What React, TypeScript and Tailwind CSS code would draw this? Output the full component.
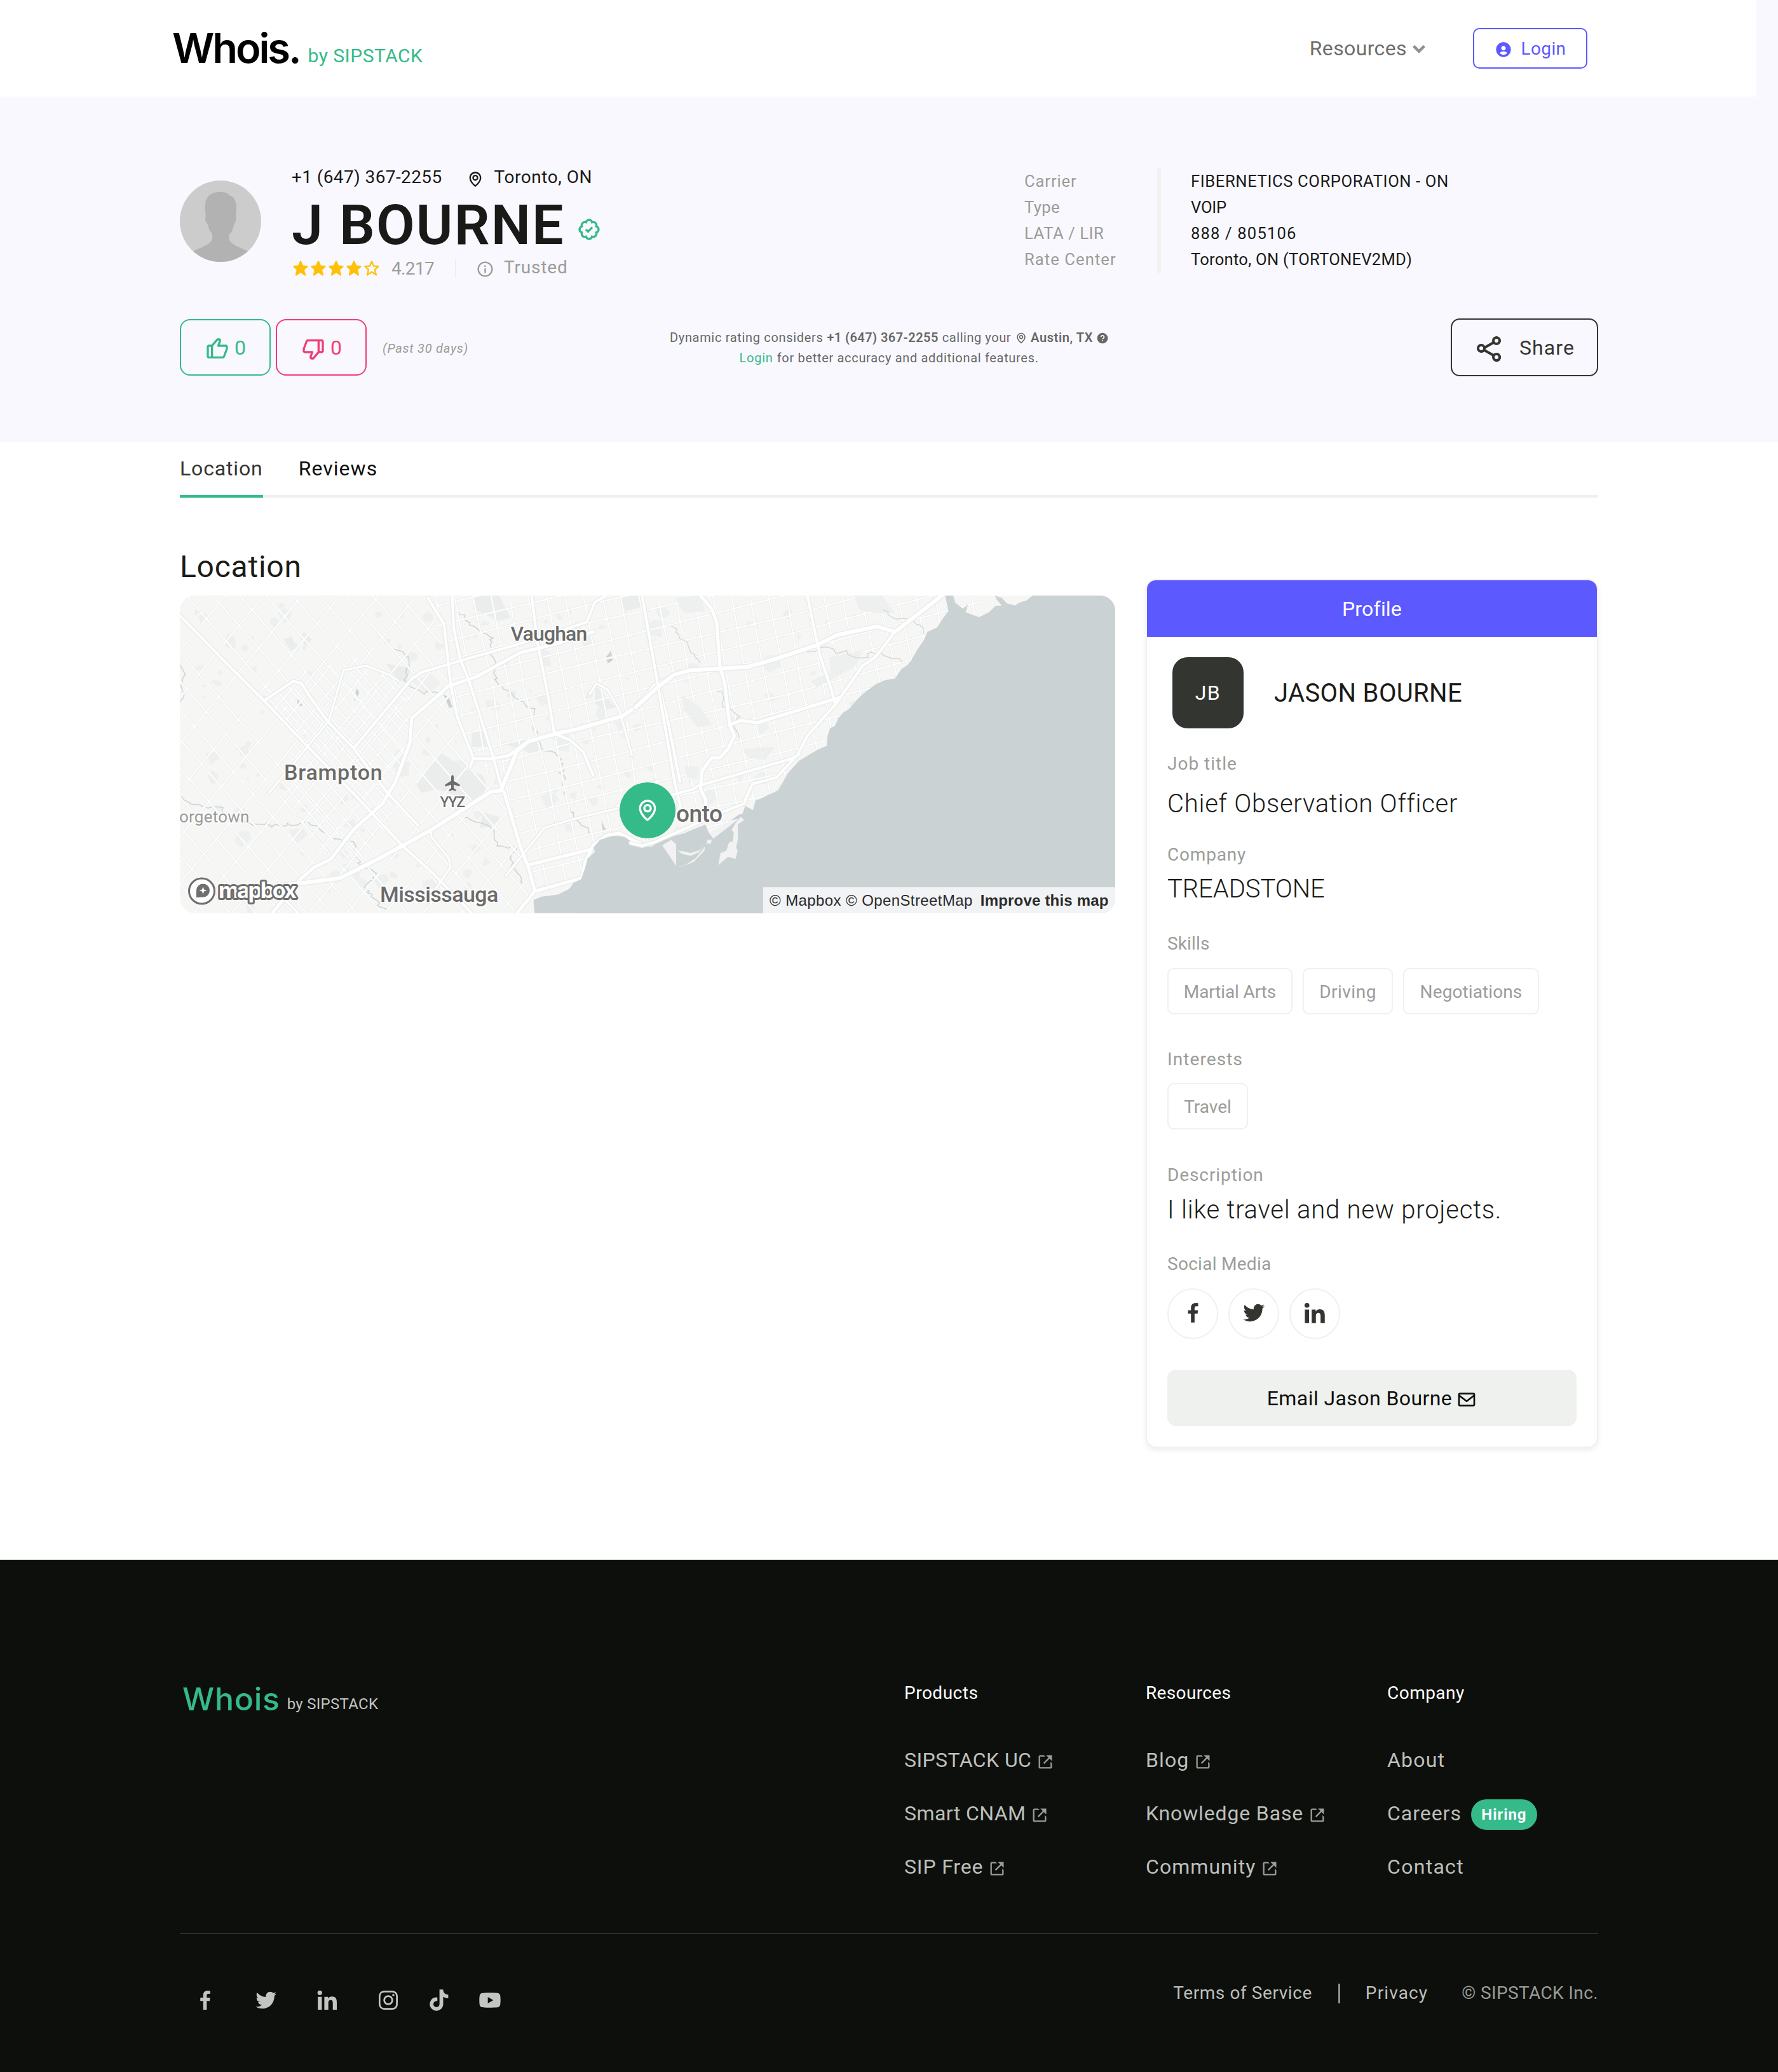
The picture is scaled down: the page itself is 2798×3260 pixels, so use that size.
import React from 'react';
import {
  BiBadgeCheck,
  BiChevronDown,
  BiDislike,
  BiEnvelope,
  BiInfoCircle,
  BiLike,
  BiLinkExternal,
  BiLogoFacebook,
  BiLogoInstagram,
  BiLogoLinkedin,
  BiLogoTiktok,
  BiLogoTwitter,
  BiLogoYoutube,
  BiMap,
  BiShareAlt,
  BiSolidHelpCircle,
  BiSolidStar,
  BiSolidUserCircle,
  BiStar,
} from 'react-icons/bi';

/* ---------------------------------- Map ---------------------------------- */

// Map geometry is kept in a stretched survey grid and projected by this matrix.
const WEST = 'matrix(0.5102 0 0 0.34437 -12.8 -16.9)';
const EAST = 'matrix(0.5102 0 0 0.34437 717.2 -16.9)';

function random(seed: number) {
  let a = seed;
  return () => {
    a = (a + 0x6d2b79f5) | 0;
    let t = Math.imul(a ^ (a >>> 15), 1 | a);
    t = (t + Math.imul(t ^ (t >>> 7), 61 | t)) ^ t;
    return ((t ^ (t >>> 14)) >>> 0) / 4294967296;
  };
}

const rnd = random(11);
const range = (from: number, to: number, step: number) => {
  const out: number[] = [];
  for (let v = from; v < to; v += step) out.push(v);
  return out;
};

const westGrid = [
  ...range(-830, -60, 78).map((x) => `${x},49 ${x + 855},1500`),
  ...range(45, 1000, 82).map((x) => `${x},49 ${x + 855},1500`),
  ...range(-640, 1100, 118).map((x) => `${x},1500 ${x + 806},49`),
];
const bramptonGrid = [
  ...range(-300, 700, 46).map((x) => `${x},49 ${x + 855},1500`),
  ...range(-200, 700, 62).map((x) => `${x},1500 ${x + 806},49`),
];
const eastGrid = [
  ...range(700, 2500, 57).map((x) => {
    const j = (rnd() - 0.5) * 24;
    return `${x},49 ${x + 55 + j},470 ${x + 110 - j},900 ${x + 190},1500`;
  }),
  ...range(140, 2300, 88).map((y) => {
    const j = (rnd() - 0.5) * 26;
    return `700,${y} 1300,${y - 225 + j} 1900,${y - 440 - j} 2500,${y - 680}`;
  }),
];

// Parks and built-up patches scattered over the land.
const patches = range(0, 230, 1).map(() => {
  const x = 60 + rnd() * 2100;
  const y = 60 + rnd() * 1420;
  const s = 5 + rnd() * rnd() * 30;
  const p: string[] = [];
  for (let i = 0; i < 7; i++) {
    const r = s * (0.45 + rnd() * 0.75);
    p.push(`${(x + Math.cos(i * 0.9) * r).toFixed(0)},${(y + Math.sin(i * 0.9) * r * 1.4).toFixed(0)}`);
  }
  return p.join(' ');
});

function meander(points: number[][], wobble: number) {
  const out: string[] = [];
  for (let i = 0; i < points.length - 1; i++) {
    const [x1, y1] = points[i];
    const [x2, y2] = points[i + 1];
    const n = Math.max(2, Math.round(Math.hypot(x2 - x1, y2 - y1) / 14));
    for (let k = 0; k < n; k++) {
      const t = k / n;
      out.push(
        `${(x1 + (x2 - x1) * t + (rnd() - 0.5) * wobble).toFixed(0)},${(y1 + (y2 - y1) * t + (rnd() - 0.5) * wobble).toFixed(0)}`,
      );
    }
  }
  return out.join(' ');
}

const westRivers = [
  meander([[25, 360], [40, 410], [28, 450], [38, 500], [25, 550]], 6),
  meander([[25, 960], [70, 1010], [150, 1020], [190, 1060], [240, 1090], [320, 1100], [430, 1085], [490, 1160], [560, 1180], [580, 1280], [630, 1320], [600, 1380], [640, 1470], [675, 1500]], 18),
  meander([[990, 310], [1000, 450], [1060, 510], [1110, 560], [1125, 670], [1140, 750], [1200, 790], [1210, 940], [1240, 1060], [1300, 1150]], 18),
  meander([[900, 1060], [980, 1100], [1010, 1200], [1060, 1200], [1045, 1270], [1095, 1390]], 16),
  meander([[690, 290], [730, 350], [720, 430], [760, 490], [840, 500]], 20),
  meander([[880, 120], [930, 190], [990, 240], [985, 320]], 16),
];
const eastRivers = [
  meander([[255, 480], [275, 550], [320, 600], [305, 660], [320, 710]], 16),
  meander([[765, 110], [800, 155], [840, 150], [885, 195], [892, 240]], 10),
  meander([[520, 300], [600, 290], [680, 330], [760, 310], [825, 360]], 24),
  meander([[115, 190], [160, 280], [205, 370]], 14),
];

const westRoads: [string, number][] = [
  ['25,140 160,345 285,530 420,740 575,975 710,1190 800,1310 860,1400 925,1500', 4],
  ['285,530 375,440 400,450 430,520 485,630 560,745 665,950 760,1100', 4],
  ['310,1500 400,1340 440,1290 490,1255 560,1120 650,1000 690,900 735,720 740,610 830,495 850,465 940,420 1075,310 1185,270 1300,215', 5],
  ['565,740 740,430 770,400 895,345 1060,275 1190,215 1280,170 1305,80 1340,49', 4],
  ['350,1370 390,1365 520,1340 640,1250 800,1120 985,945 1015,940 1065,760 1100,715 1185,680 1250,660 1390,600 1430,560 1490,460 1568,400', 6],
  ['1025,945 1050,1070 1075,1195 1100,1290 1120,1400', 5],
  ['1065,1500 1120,1400 1265,1340 1275,1270 1300,1190 1340,1145 1380,1135 1420,1165 1455,1190 1500,1175 1568,1130', 5],
  ['935,795 985,795 1040,780 1100,715', 5],
  ['865,49 870,200 890,340 915,430 990,780 1020,940', 4],
  ['790,60 840,180 860,450 880,600 930,790 920,835', 4],
  ['1110,49 1130,280 1160,500 1180,680 1230,710 1270,765 1300,870', 4],
  ['1290,500 1310,450 1345,480 1380,570 1420,780', 3],
  ['1450,49 1480,300 1505,470 1530,620 1568,900', 4],
  ['1100,1280 1290,1210', 5],
  ['1030,1330 1150,1110 1240,1070 1380,1020', 3],
  ['800,1120 800,1150 855,1250 860,1290 800,1420', 3],
  ['350,1440 390,1500', 3],
  ['300,950 385,800 485,620 530,390 600,370 670,410 700,440', 3],
];
const eastRoads: [string, number][] = [
  ['0,560 70,465 120,410 170,390 345,375 430,340 560,275 620,230 745,190 800,215 945,49', 6],
  ['-15,1180 20,1192 60,1175 90,1155 160,1110 230,1060 335,1000 340,975 360,910 435,880 500,775 530,690 620,540 700,370 740,330 800,215', 4],
  ['200,49 235,110 250,170 260,370 275,450 290,640 305,690 285,750 260,790 235,790 205,850 200,930 215,980 220,1050', 5],
  ['530,49 545,160 570,330 600,460 615,540', 4],
  ['20,49 50,300 90,640 120,900 150,1080', 4],
  ['110,960 175,935 190,920 340,855 480,795 505,775', 4],
  ['290,640 325,620 375,630 630,515', 5],
  ['-60,1010 60,970 110,960', 3],
];

const WATER =
  '-311,1500 -315,1440 -290,1425 -240,1415 -205,1390 -190,1360 -168,1345 -155,1290 -148,1250 -125,1220 -130,1200 -110,1165 -70,1147 -35,1150 -5,1180 20,1195 50,1197 60,1185 80,1158 110,1150 150,1135 190,1110 215,1095 225,1130 240,1160 262,1110 300,1070 318,1050 330,1045 338,1010 362,1030 370,985 390,975 405,962 440,940 455,900 470,860 505,803 540,772 560,755 590,735 592,690 600,655 615,645 625,610 640,585 660,565 680,530 700,500 740,455 770,435 800,428 820,385 840,365 850,345 870,295 890,250 900,215 930,195 945,160 965,120 955,49 980,49 985,80 1010,110 1025,90 1018,125 1035,135 1060,148 1090,125 1110,97 1130,95 1115,70 1108,49 1130,60 1145,85 1170,95 1185,80 1205,72 1225,49 1490,49 1490,1510';

const LAND = [
  '82,1190 110,1165 125,1185 125,1285 105,1240',
  '125,1287 150,1283 185,1250 215,1195 212,1215 180,1265 145,1287',
  '130,1215 145,1230 170,1238 195,1222 212,1190 198,1212 170,1226 148,1218',
  '222,1165 235,1165 232,1183 218,1182',
  '325,1060 335,1075 315,1095 316,1160 310,1200 315,1215 308,1252 285,1243 255,1280 262,1225 280,1215 288,1178 300,1172 303,1130 296,1120 310,1085',
  '228,1135 295,1075 318,1070 240,1160',
];

function Roads({ items }: { items: [string, number][] }) {
  return (
    <g fill="none" strokeLinejoin="round" strokeLinecap="round">
      {items.map(([p, w], i) => (
        <polyline key={`c${i}`} points={p} stroke="#eaedec" strokeWidth={w + 3} vectorEffect="non-scaling-stroke" />
      ))}
      {items.map(([p, w], i) => (
        <polyline key={`r${i}`} points={p} stroke="#ffffff" strokeWidth={w} vectorEffect="non-scaling-stroke" />
      ))}
    </g>
  );
}

function Grid({ items, clip }: { items: string[]; clip: string }) {
  return (
    <g clipPath={`url(#${clip})`} fill="none">
      {items.map((p, i) => (
        <polyline key={`c${i}`} points={p} stroke="#eaeded" strokeWidth="3.6" vectorEffect="non-scaling-stroke" />
      ))}
      {items.map((p, i) => (
        <polyline key={`r${i}`} points={p} stroke="#ffffff" strokeWidth="2" vectorEffect="non-scaling-stroke" />
      ))}
    </g>
  );
}

function Label({ x, y, size, spacing = 0, weight = 500, fill = '#6b6b6b', children }: { x: number; y: number; size: number; spacing?: number; weight?: number; fill?: string; children: string }) {
  return (
    <text x={x} y={y} fontFamily="Roboto, sans-serif" fontSize={size} fontWeight={weight} letterSpacing={spacing} fill={fill} stroke="#ffffff" strokeWidth="4" strokeOpacity="0.8" strokeLinejoin="round" paintOrder="stroke">
      {children}
    </text>
  );
}

function MapView() {
  return (
    <div className="relative mt-[17px] h-[500px] w-[1472px] overflow-hidden rounded-3xl bg-[#f6f6f4]">
      <svg width="1472" height="500" viewBox="0 0 1472 500" className="block">
        <defs>
          <clipPath id="west">
            <polygon points="25,49 730,49 800,90 860,465 880,600 930,790 1020,940 1100,1290 1120,1500 25,1500" />
          </clipPath>
          <clipPath id="brampton">
            <polygon points="285,530 400,400 560,330 700,440 740,610 700,900 640,1230 470,1280 330,900 380,720" />
          </clipPath>
          <clipPath id="east">
            <polygon points="730,49 3000,49 3000,1500 1120,1500 1100,1290 1020,940 930,790 880,600 860,465 800,90" />
          </clipPath>
        </defs>
        <g transform={WEST}>
          {patches.map((p, i) => (
            <polygon key={i} points={p} fill="#eef0ef" />
          ))}
          <g fill="#ebedec">
            <polygon points="830,765 900,840 960,870 975,930 930,985 870,960 820,935 770,950 755,915" />
            <polygon points="345,250 370,235 382,280 368,305" />
            <polygon points="395,235 410,215 432,250 412,282" />
            <polygon points="925,670 970,680 972,740 925,740" />
            <polygon points="1305,455 1370,560 1340,570 1305,545" />
            <polygon points="1375,49 1450,49 1455,100 1400,120" />
            <polygon points="935,49 1010,49 1045,150 1010,165 930,110" />
            <polygon points="960,1040 1010,1060 1000,1100 950,1110" />
            <polygon points="660,360 740,380 720,450 690,420" />
            <polygon points="740,440 800,410 830,450 790,500" fill="#f0f0f0" />
            <polygon points="1010,720 1130,700 1150,760 1110,770" />
          </g>
          <g fill="#cad2d3">
            <polygon points="570,472 578,490 572,525 562,528" />
            <polygon points="388,520 405,535 400,555 388,548" />
            <polygon points="838,500 855,515 866,560 856,562" />
            <polygon points="1340,330 1355,300 1360,345 1345,360" />
            <polygon points="1325,1075 1335,1110 1345,1125 1330,1128" />
          </g>
          {westRivers.map((p, i) => (
            <polyline key={i} points={p} fill="none" stroke="#cbd4d5" strokeWidth="1.5" vectorEffect="non-scaling-stroke" />
          ))}
          <Grid items={westGrid} clip="west" />
          <Grid items={bramptonGrid} clip="brampton" />
          <Grid items={eastGrid} clip="east" />
          <Roads items={westRoads} />
        </g>
        <g transform={EAST}>
          <g fill="#ebedec" fillOpacity="0.7">
            <polygon points="675,49 760,49 800,130 750,130 690,115" />
            <polygon points="140,500 200,560 235,640 190,650 150,570" />
            <polygon points="600,330 700,300 680,370 620,420 560,470 540,440 600,400" />
            <polygon points="330,750 430,740 400,800 350,790" />
            <polygon points="120,60 200,49 215,120 150,130" />
            <polygon points="150,830 195,830 190,890 160,880" />
          </g>
          {eastRivers.map((p, i) => (
            <polyline key={i} points={p} fill="none" stroke="#d3dadb" strokeWidth="1.5" vectorEffect="non-scaling-stroke" />
          ))}
          <Roads items={eastRoads.slice(0, 1)} />
          <polygon points={WATER} fill="#cad2d3" />
          {LAND.map((p, i) => (
            <polygon key={i} points={p} fill="#f1f2f1" />
          ))}
          <Roads items={eastRoads} />
        </g>
        <path d="M429 282.500q2 0 2 4v5l9.500 6v3l-9.500-3v5.500l3.500 2.500v2l-5.500-1.500-5.500 1.500v-2l3.500-2.500v-5.500l-9.500 3v-3l9.500-6v-5q0-4 2-4z" fill="#6b6b6b" />
        <Label x={520.5} y={71} size={32} spacing={-0.86}>Vaughan</Label>
        <Label x={164} y={290} size={34} spacing={0.8}>Brampton</Label>
        <Label x={409.5} y={333} size={23} spacing={-1.3}>YYZ</Label>
        <Label x={-1} y={357} size={26} weight={400} fill="#999b9a" spacing={0.23}>orgetown</Label>
        <Label x={315} y={482} size={34} spacing={-0.56}>Mississauga</Label>
        <Label x={781} y={356} size={37} spacing={-0.5}>onto</Label>
        <circle cx="34.500" cy="465" r="20" fill="#ffffff" stroke="#6f6f6f" strokeWidth="3" />
        <path d="M26 475v-11a10.500 10.500 0 1 1 10.500 10.500z" fill="#6f6f6f" />
        <path d="m36.500 458 1.600 4.400 4.400 1.600-4.400 1.600-1.600 4.400-1.600-4.400-4.400-1.600 4.400-1.600z" fill="#ffffff" />
        <text x="61" y="476" fontFamily="Inter, sans-serif" fontSize="35" fontWeight="700" textLength="123" fill="#ffffff" stroke="#6f6f6f" strokeWidth="6" strokeLinejoin="round" paintOrder="stroke">
          mapbox
        </text>
      </svg>
      <div className="absolute top-[294px] left-[692px] flex size-[88px] items-center justify-center rounded-full bg-[#35ba8a] text-white">
        <BiMap size={40} />
      </div>
      <div className="absolute right-0 bottom-0 flex h-[41px] w-[554px] items-center gap-3 bg-[#f1f3f5] pl-[10px] font-['Liberation_Sans',sans-serif] text-[24px] leading-[41px] whitespace-nowrap text-[#2b2b2b]">
        <span className="tracking-[0.4px]">© Mapbox © OpenStreetMap</span>
        <span className="font-bold tracking-[0.2px]">Improve this map</span>
      </div>
    </div>
  );
}

/* --------------------------------- Header -------------------------------- */

function Header() {
  return (
    <header className="flex h-[152px] w-[2764px] items-center justify-between bg-white pr-[266px] pl-[271px]">
      <div className="flex items-center">
        <span className="font-['Inter',sans-serif] text-[65px] leading-[80px] font-semibold tracking-[-3.1px] text-black">Whois.</span>
        <span className="ml-[13px] pt-6 text-[30px] leading-[40px] tracking-[0.48px] text-[#35ba8a]">by SIPSTACK</span>
      </div>
      <nav className="flex items-center">
        <a className="flex items-center text-[32px] leading-[40px] tracking-[0.38px] text-[#6c6e6b]">
          Resources
          <BiChevronDown size={38} className="text-[#8f918e]" stroke="currentColor" strokeWidth={0.8} />
        </a>
        <a className="ml-[66px] flex h-16 w-[180px] items-center justify-center gap-[14px] rounded-[10px] border-2 border-[#5c59ff] text-[28px] tracking-[0.35px] text-[#5c59ff]">
          <BiSolidUserCircle size={28} className="mt-1" />
          <span className="pt-0.5">Login</span>
        </a>
      </nav>
    </header>
  );
}

/* ---------------------------------- Hero --------------------------------- */

function Avatar() {
  return (
    <svg width="128" height="128" viewBox="0 0 128 128" className="mt-[25px] shrink-0 rounded-full bg-[#cccccc]">
      <path
        d="M0 128V122C10 116 18 113 22 111C30 106 48 102 51 92V84C46 79 45 72 44 69C40 66 39 60 41 56C38 38 38 18 64 18C71 18 76 20 78 23.500C88 25 91 40 88 56C90 60 88 66 85 69C84 76 82 81 77.500 85V92C80 102 98 106 106 111C112 113 120 118 128 122V128Z"
        fill="#b2b2b2"
      />
    </svg>
  );
}

const details: [string, string, string, string][] = [
  ['Carrier', 'FIBERNETICS CORPORATION - ON', 'tracking-[0.88px]', 'tracking-[0.59px]'],
  ['Type', 'VOIP', 'tracking-[0.38px]', 'tracking-[-0.23px]'],
  ['LATA / LIR', '888 / 805106', 'tracking-[0.55px]', 'tracking-[1.15px]'],
  ['Rate Center', 'Toronto, ON (TORTONEV2MD)', 'tracking-[1.07px]', 'tracking-[0.24px]'],
];

function Hero() {
  return (
    <section className="h-[544px]">
      <div className="mx-auto w-[2232px] pt-[107px]">
        <div className="flex items-start">
          <Avatar />
          <div className="ml-12">
            <div className="flex items-center text-[28px] leading-[40px] text-[#1a1b18]">
              <span className="tracking-[0.39px]">+1 (647) 367-2255</span>
              <BiMap size={28} className="mt-[5px] ml-[38px]" />
              <span className="ml-4 tracking-[0.55px]">Toronto, ON</span>
            </div>
            <div className="mt-[11px] flex h-[88px] items-center">
              <h1 className="text-[88px] leading-[88px] font-semibold tracking-[2.09px] text-[#191a17]">J BOURNE</h1>
              <BiBadgeCheck size={40} className="mt-[14px] ml-[18px] text-[#35ba8a]" />
            </div>
            <div className="mt-2 flex h-8 items-center text-[28px] leading-[32px] text-[#9a9d98]">
              <div className="flex text-[#ffc107]">
                <BiSolidStar size={28} />
                <BiSolidStar size={28} />
                <BiSolidStar size={28} />
                <BiSolidStar size={28} />
                <BiStar size={28} />
              </div>
              <span className="ml-[17px] w-[68px] pt-0.5 tracking-[-0.65px]">4.217</span>
              <span className="ml-8 h-[30px] w-0.5 bg-[#eff0ee]" />
              <BiInfoCircle size={29} className="mt-[3px] ml-[31px]" />
              <span className="-mt-0.5 ml-[15px] tracking-[0.82px]">Trusted</span>
            </div>
          </div>
          <div className="mt-[6px] mr-[284px] ml-auto flex text-[25.6px] leading-[41px]">
            <div className="w-[209px] text-[#9a9d98]">
              {details.map(([label, , track]) => (
                <div key={label} className={track}>{label}</div>
              ))}
            </div>
            <div className="w-1.5 bg-[#f1f2f1]" />
            <div className="w-[404px] pl-[47px] whitespace-nowrap text-[#1a1b18]">
              {details.map(([label, value, , track]) => (
                <div key={label} className={track}>{value}</div>
              ))}
            </div>
          </div>
        </div>

        <div className="mt-[63px] grid h-[91px] grid-cols-[1fr_auto_1fr] items-center">
          <div className="flex items-center">
            <button className="flex h-[89px] w-[143px] items-center justify-center gap-[7px] rounded-2xl border-2 border-[#35ba8a] text-[32px] text-[#35ba8a]">
              <BiLike size={40} className="mt-1" />0
            </button>
            <button className="ml-2 flex h-[89px] w-[143px] items-center justify-center gap-[7px] rounded-2xl border-2 border-[#ef3e74] text-[32px] text-[#ef3e74]">
              <BiDislike size={40} className="mt-1" />0
            </button>
            <span className="ml-[25px] pt-[3px] text-[20px] tracking-[0.75px] text-[#9a9d98] italic">(Past 30 days)</span>
          </div>
          <div className="flex flex-col items-center text-[20px] leading-[32px] text-[#666865]">
            <div className="flex items-center gap-[6px] pl-px">
              <span className="tracking-[0.67px]">Dynamic rating considers</span>
              <b className="font-semibold tracking-[0.44px]">+1 (647) 367-2255</b>
              <span className="tracking-[0.55px]">calling your</span>
              <BiMap size={20} className="mt-[3px] -mr-px" />
              <b className="font-semibold tracking-[0.6px]">Austin, TX</b>
              <BiSolidHelpCircle size={20} className="mt-[3px] -ml-[1px]" />
            </div>
            <div className="flex gap-[6px]">
              <span className="tracking-[0.8px] text-[#35ba8a]">Login</span>
              <span className="tracking-[0.68px]">for better accuracy and additional features.</span>
            </div>
          </div>
          <button className="ml-auto flex h-[91px] w-[232px] items-center justify-center gap-[23px] rounded-[14px] border-2 border-[#333531] text-[32px] tracking-[1.11px] text-[#333531]">
            <BiShareAlt size={48} className="mt-1" />
            Share
          </button>
        </div>
      </div>
    </section>
  );
}

/* ------------------------------ Profile card ----------------------------- */

const chip = 'flex h-[73px] items-center justify-center rounded-[10px] border-2 border-[#f0f0f0] pt-0.5 text-[28px] text-[#9a9d98]';
const label = 'text-[28px] leading-[40px] text-[#9a9d98]';
const value = 'text-[40px] leading-[48px] font-light text-[#1a1b18]';
const round = 'flex size-20 items-center justify-center rounded-full border-2 border-[#f0f0f0] pb-[3px] text-[#333531]';

function ProfileCard() {
  return (
    <aside className="mt-[128px] w-[712px] overflow-hidden rounded-2xl border-2 border-[#f0f0f1] bg-white shadow-[0_4px_8px_rgba(0,0,0,0.07)]">
      <div className="h-[89px] bg-[#5c59ff] pt-px text-center text-[32px] leading-[89px] tracking-[0.2px] text-white">Profile</div>
      <div className="px-8 pt-8 pb-8">
        <div className="ml-2 flex items-center">
          <div className="flex size-28 items-center justify-center rounded-3xl bg-[#333531] text-[32px] tracking-[1.5px] text-white">JB</div>
          <span className="ml-12 pt-0.5 text-[40px] leading-[48px] tracking-[0.36px] text-[#1a1b18]">JASON BOURNE</span>
        </div>
        <div className={`${label} mt-9 tracking-[1px]`}>Job title</div>
        <div className={`${value} mt-[19px] tracking-[0.75px]`}>Chief Observation Officer</div>
        <div className={`${label} mt-9 tracking-[0.81px]`}>Company</div>
        <div className={`${value} mt-[10px] tracking-[-0.09px]`}>TREADSTONE</div>
        <div className={`${label} mt-[42px] tracking-[0.15px]`}>Skills</div>
        <div className="mt-[18px] flex gap-4">
          <div className={`${chip} w-[197px] tracking-[-0.13px]`}>Martial Arts</div>
          <div className={`${chip} w-[142px] tracking-[0.5px]`}>Driving</div>
          <div className={`${chip} w-[214px] tracking-[0.1px]`}>Negotiations</div>
        </div>
        <div className={`${label} mt-[51px] tracking-[1.1px]`}>Interests</div>
        <div className="mt-[17px] flex">
          <div className={`${chip} w-[127px]`}>Travel</div>
        </div>
        <div className={`${label} mt-[52px] tracking-[0.9px]`}>Description</div>
        <div className={`${value} mt-[11px] tracking-[0.78px]`}>I like travel and new projects.</div>
        <div className={`${label} mt-[41px] tracking-[0.28px]`}>Social Media</div>
        <div className="mt-[18px] flex gap-4">
          <div className={round}><BiLogoFacebook size={41} /></div>
          <div className={round}><BiLogoTwitter size={41} /></div>
          <div className={round}><BiLogoLinkedin size={42} /></div>
        </div>
        <button className="mt-12 flex h-[89px] w-full items-center justify-center gap-[7px] rounded-[14px] bg-[#eff1ee] text-[32px] tracking-[0.42px] text-[#0e0f0c]">
          Email Jason Bourne
          <BiEnvelope size={32} className="mt-1" />
        </button>
      </div>
    </aside>
  );
}

/* --------------------------------- Footer -------------------------------- */

function FooterLink({ track, children }: { track: string; children: string }) {
  return (
    <div className="flex h-10 items-center">
      <span className={track}>{children}</span>
      <BiLinkExternal size={28} className="mt-[6px] ml-[8px] text-[#9a9c98]" />
    </div>
  );
}

const column = 'flex flex-col gap-11 text-[32px] leading-[40px] text-[#bdbfbb]';
const heading = 'mb-[21px] pt-px text-[28px] leading-[40px] text-white';

function Footer() {
  return (
    <footer className="mt-[176px] h-[806px] bg-[#0d0f0c]">
      <div className="mx-auto w-[2232px] pt-[189px]">
        <div className="flex border-b-2 border-[#2c2e2b] pb-[84px] whitespace-nowrap">
          <div className="ml-1 flex h-[60px] w-[1136px] items-center">
            <span className="font-['Inter',sans-serif] text-[50px] leading-[60px] font-medium tracking-[0.74px] text-[#35ba8a]">Whois</span>
            <span className="ml-[11px] pt-4 text-[24px] leading-[40px] tracking-[0.3px] text-[#c4c5c3]">by SIPSTACK</span>
          </div>
          <div className={`${column} w-[380px]`}>
            <div className={`${heading} tracking-[0.5px]`}>Products</div>
            <FooterLink track="tracking-[0.4px]">SIPSTACK UC</FooterLink>
            <FooterLink track="tracking-[0.41px]">Smart CNAM</FooterLink>
            <FooterLink track="tracking-[0.85px]">SIP Free</FooterLink>
          </div>
          <div className={`${column} w-[380px]`}>
            <div className={`${heading} tracking-[0.35px]`}>Resources</div>
            <FooterLink track="tracking-[1.1px]">Blog</FooterLink>
            <FooterLink track="tracking-[0.85px]">Knowledge Base</FooterLink>
            <FooterLink track="tracking-[1.05px]">Community</FooterLink>
          </div>
          <div className={column}>
            <div className={`${heading} tracking-[0.47px]`}>Company</div>
            <div className="tracking-[1.2px]">About</div>
            <div className="flex h-10 items-center">
              <span className="tracking-[0.97px]">Careers</span>
              <span className="mt-1 ml-[15px] flex h-12 w-[104px] items-center justify-center rounded-full bg-[#35ba8a] text-[24px] font-bold tracking-[0.9px] text-white">Hiring</span>
            </div>
            <div className="tracking-[1.3px]">Contact</div>
          </div>
        </div>
        <div className="flex items-start justify-between">
          <div className="mt-[84px] ml-5 flex gap-10 text-[#c4c5c3]">
            <div className="flex gap-14">
              <BiLogoFacebook size={40} />
              <BiLogoTwitter size={40} />
              <BiLogoLinkedin size={40} />
              <BiLogoInstagram size={40} />
            </div>
            <BiLogoTiktok size={40} />
            <BiLogoYoutube size={40} />
          </div>
          <div className="mt-[73px] flex items-center text-[28px] leading-[40px] text-[#bdbfbb]">
            <span className="tracking-[0.57px]">Terms of Service</span>
            <span className="ml-[41px] h-[31px] w-[3px] bg-[#8f918e]" />
            <span className="ml-10 tracking-[1.13px]">Privacy</span>
            <span className="ml-[53px] tracking-[0.38px] text-[#9a9c98]">© SIPSTACK Inc.</span>
          </div>
        </div>
      </div>
    </footer>
  );
}

export default function App() {
  return (
    <div className="h-[3260px] w-[2798px] overflow-hidden bg-white font-['Roboto',sans-serif]">
      <div className="bg-[#f9f8fe]">
        <Header />
        <Hero />
      </div>
      <main className="mx-auto w-[2232px]">
        <nav className="flex h-[87px] gap-[56px] border-b-4 border-[#eff1ee] text-[32px] leading-[82px]">
          <span className="h-[87px] border-b-4 border-[#35ba8a] tracking-[0.85px] text-[#333531]">Location</span>
          <span className="tracking-[1.05px] text-[#0e0f0c]">Reviews</span>
        </nav>
        <div className="flex items-start justify-between">
          <section>
            <h2 className="mt-[81px] text-[48px] leading-[56px] tracking-[0.75px] text-[#1a1b18]">Location</h2>
            <MapView />
          </section>
          <ProfileCard />
        </div>
      </main>
      <Footer />
    </div>
  );
}
